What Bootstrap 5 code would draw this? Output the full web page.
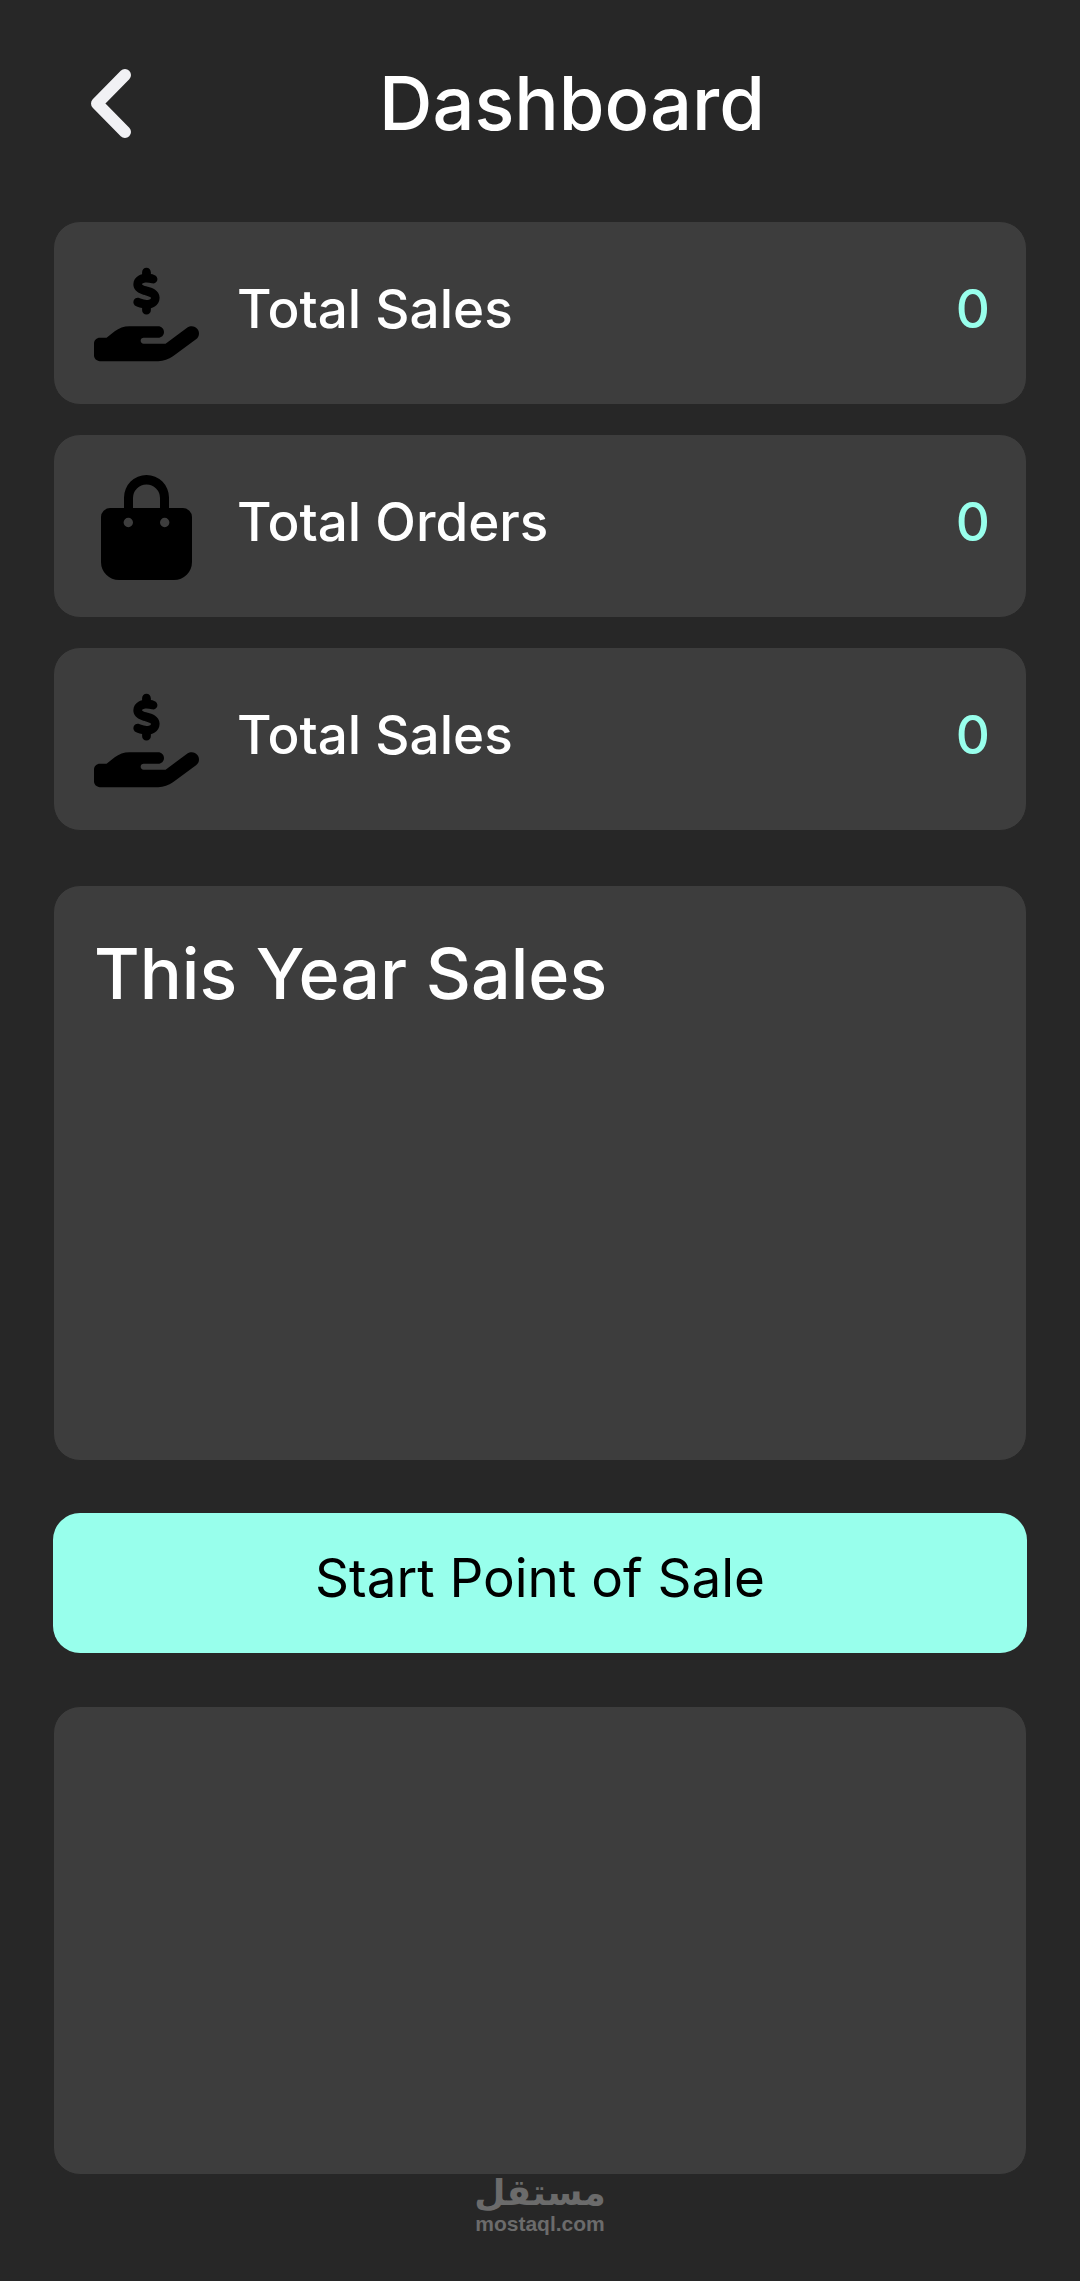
<!DOCTYPE html>
<html lang="en">
<head>
<meta charset="utf-8">
<meta name="viewport" content="width=device-width, initial-scale=1">
<title>Dashboard</title>
<link href="https://cdn.jsdelivr.net/npm/bootstrap@5.3.0/dist/css/bootstrap.min.css" rel="stylesheet">
<style>
  :root { --page: #272727; --panel: #3d3d3d; --accent: #98ffec; }
  body { background: var(--page); color: #fff; font-family: Inter, "Open Sans", sans-serif; }
  .screen { padding: 0 53px; }
  .topbar { height: 221px; padding: 0 20px 16px 32px; }
  .back-link { width: 52px; height: 80px; }
  .page-title { font-size: 74px; line-height: 80px; font-weight: 500; }
  .panel { background: var(--panel); border: 1px solid var(--page); border-radius: 27px; color: #fff; }
  .stat { height: 184px; padding: 2px 36px 0 40px; gap: 38px; }
  .stat-list { gap: 29px; }
  .stat-icon { width: 105px; height: 105px; }
  .stat-text { font-size: 53px; line-height: 64px; font-weight: 500; padding-bottom: 10px; }
  .stat-value { color: var(--accent); }
  .chart-panel { height: 576px; padding: 48px 40px; margin-top: 54px; }
  .panel-title { font-size: 70px; line-height: 80px; font-weight: 500; }
  .start-btn { height: 140px; margin-top: 52px; border-radius: 27px; padding: 0 0 10px;
    background: var(--accent); color: #000; font-size: 53px; line-height: 64px; --bs-btn-hover-bg: #80ead6; --bs-btn-border-width: 0; }
  .list-panel { height: 469px; margin-top: 53px; }
  .brand { color: #6b6b6b; text-decoration: none; padding-bottom: 32px; }
  .brand-ar { font: bold 36px/36px "DejaVu Sans", sans-serif; }
  .brand-en { font: bold 21px/26px "Liberation Sans", sans-serif; }
</style>
</head>
<body>
<svg class="d-none" aria-hidden="true">
  <symbol id="hand-dollar" viewBox="0 0 576 512">
    <path d="M312 24V34.5c6.4 1.2 12.6 2.7 18.2 4.2c12.8 3.4 20.4 16.6 17 29.4s-16.6 20.4-29.4 17c-10.9-2.9-21.1-4.9-30.2-5c-7.3-.1-14.7 1.7-19.4 4.4c-2.1 1.3-3.1 2.4-3.5 3c-.3 .5-.7 1.2-.7 2.8c0 .3 0 .5 0 .6c.2 .2 .9 1.2 3.3 2.6c5.8 3.5 14.4 6.2 27.4 10.1l.9 .3c11.1 3.3 25.9 7.8 37.9 15.3c13.7 8.6 26.1 22.9 26.4 44.9c.3 22.5-11.4 38.9-26.7 48.5c-6.7 4.1-13.9 7-21.3 8.8V232c0 13.3-10.7 24-24 24s-24-10.7-24-24V220.6c-9.5-2.3-18.2-5.3-25.6-7.8c-2.1-.7-4.1-1.4-6-2c-12.6-4.2-19.4-17.8-15.2-30.4s17.8-19.4 30.4-15.2c2.6 .9 5 1.7 7.3 2.5c13.6 4.6 23.4 7.9 33.9 8.3c8 .3 15.1-1.6 19.2-4.1c1.9-1.2 2.8-2.2 3.2-2.9c.4-.6 .9-1.8 .8-4.1l0-.2c0-1 0-2.1-4-4.6c-5.7-3.6-14.3-6.4-27.1-10.3l-1.9-.6c-10.8-3.2-25-7.5-36.4-14.4c-13.5-8.1-26.5-22-26.6-44.1c-.1-22.9 12.9-38.6 27.7-47.4c6.4-3.8 13.3-6.4 20.2-8.2V24c0-13.3 10.7-24 24-24s24 10.7 24 24z"/>
    <path d="M568.2 336.3c13.1 17.8 9.3 42.8-8.5 55.9L433.1 485.5c-23.4 17.2-51.6 26.5-80.7 26.5H32c-17.7 0-32-14.3-32-32V416c0-17.7 14.3-32 32-32H68.8l44.9-36c22.7-18.2 50.9-28 80-28H352c17.7 0 32 14.3 32 32s-14.3 32-32 32H272c-8.8 0-16 7.2-16 16s7.2 16 16 16H392.6l119.7-88.2c17.8-13.1 42.8-9.3 55.9 8.5z"/>
  </symbol>
</svg>

<main class="screen container-fluid d-flex flex-column">
  <header class="topbar d-flex align-items-center">
    <a class="back-link d-flex" href="#" aria-label="Back">
      <svg width="52" height="80" viewBox="0 0 52 80" fill="none" stroke="#f1f1f4" stroke-width="12" stroke-linecap="round" stroke-linejoin="round"><path d="M40 12 12 40.500 40 69"/></svg>
    </a>
    <h1 class="page-title flex-grow-1 text-center m-0">Dashboard</h1>
  </header>

  <section class="stat-list d-flex flex-column" aria-label="Totals">
    <div class="panel stat d-flex align-items-center">
      <svg class="stat-icon flex-shrink-0" aria-hidden="true"><use href="#hand-dollar"/></svg>
      <span class="stat-text flex-grow-1">Total Sales</span>
      <span class="stat-text stat-value">0</span>
    </div>
    <div class="panel stat d-flex align-items-center">
      <svg class="stat-icon flex-shrink-0" viewBox="0 0 105 105" aria-hidden="true">
        <path fill-rule="evenodd" d="M30 33V22.500a22.500 22.500 0 0 1 45 0V33H89a9 9 0 0 1 9 9V87a18 18 0 0 1-18 18H25A18 18 0 0 1 7 87V42a9 9 0 0 1 9-9ZM39 33H66V23a13.500 13.500 0 0 0-27 0ZM39 47.500a4.700 4.700 0 1 0-9.400 0 4.700 4.700 0 1 0 9.400 0ZM75.400 47.500a4.700 4.700 0 1 0-9.400 0 4.700 4.700 0 1 0 9.400 0Z"/>
      </svg>
      <span class="stat-text flex-grow-1">Total Orders</span>
      <span class="stat-text stat-value">0</span>
    </div>
    <div class="panel stat d-flex align-items-center">
      <svg class="stat-icon flex-shrink-0" aria-hidden="true"><use href="#hand-dollar"/></svg>
      <span class="stat-text flex-grow-1">Total Sales</span>
      <span class="stat-text stat-value">0</span>
    </div>
  </section>

  <section class="panel chart-panel">
    <h2 class="panel-title m-0">This Year Sales</h2>
  </section>

  <button type="button" class="btn start-btn w-100">Start Point of Sale</button>

  <section class="panel list-panel" aria-label="Recent activity"></section>

  <a class="brand d-flex flex-column align-items-center align-self-center" href="#">
    <span class="brand-ar" lang="ar" dir="rtl">مستقل</span>
    <span class="brand-en">mostaql.com</span>
  </a>
</main>
<script src="https://cdn.jsdelivr.net/npm/bootstrap@5.3.0/dist/js/bootstrap.bundle.min.js"></script>
</body>
</html>
